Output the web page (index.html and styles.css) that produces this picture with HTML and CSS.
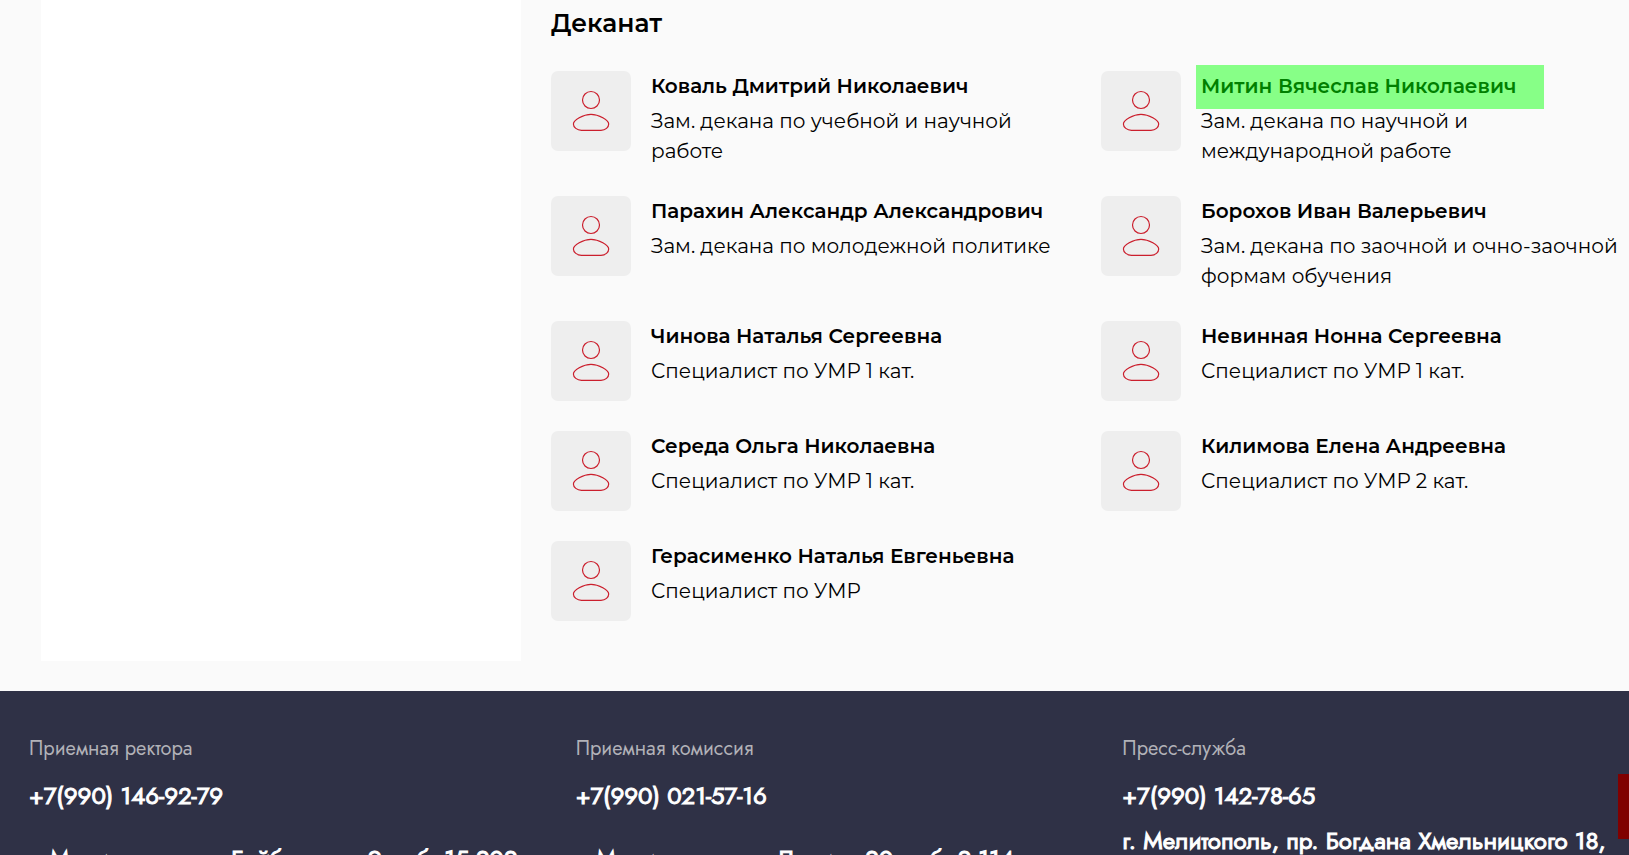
FILE: index.html
```html
<!DOCTYPE html>
<html lang="ru">
<head>
    <meta charset="UTF-8">
    <meta name="viewport" content="width=device-width, initial-scale=1.0">
    <title>Деканат</title>
    <link rel="stylesheet" href="styles.css">
</head>
<body>
    <svg class="sprite" width="0" height="0" aria-hidden="true">
        <symbol id="user" viewBox="0 0 80 80">
            <circle cx="40" cy="29" r="8.5"/>
            <path d="M30.5 59.3H50C54.5 59.3 57.7 56.3 57.7 53C57.7 49.5 48 43.3 40 43.3C32 43.3 22.4 49.5 22.4 53C22.4 56.3 26 59.3 30.5 59.3Z"/>
        </symbol>
    </svg>

    <main class="page">
        <aside class="sidebar"></aside>
        <section class="content">
            <h2>Деканат</h2>
            <ul class="staff">
                <li class="person">
                    <svg class="avatar"><use href="#user"/></svg>
                    <div class="info">
                        <h3 class="name">Коваль Дмитрий Николаевич</h3>
                        <p class="post">Зам. декана по учебной и научной работе</p>
                    </div>
                </li>
                <li class="person">
                    <svg class="avatar"><use href="#user"/></svg>
                    <div class="info">
                        <h3 class="name marked">Митин Вячеслав Николаевич</h3>
                        <p class="post">Зам. декана по научной и международной работе</p>
                    </div>
                </li>
                <li class="person">
                    <svg class="avatar"><use href="#user"/></svg>
                    <div class="info">
                        <h3 class="name">Парахин Александр Александрович</h3>
                        <p class="post">Зам. декана по молодежной политике</p>
                    </div>
                </li>
                <li class="person">
                    <svg class="avatar"><use href="#user"/></svg>
                    <div class="info">
                        <h3 class="name">Борохов Иван Валерьевич</h3>
                        <p class="post">Зам. декана по заочной и очно-заочной формам обучения</p>
                    </div>
                </li>
                <li class="person">
                    <svg class="avatar"><use href="#user"/></svg>
                    <div class="info">
                        <h3 class="name">Чинова Наталья Сергеевна</h3>
                        <p class="post">Специалист по УМР 1 кат.</p>
                    </div>
                </li>
                <li class="person">
                    <svg class="avatar"><use href="#user"/></svg>
                    <div class="info">
                        <h3 class="name">Невинная Нонна Сергеевна</h3>
                        <p class="post">Специалист по УМР 1 кат.</p>
                    </div>
                </li>
                <li class="person">
                    <svg class="avatar"><use href="#user"/></svg>
                    <div class="info">
                        <h3 class="name">Середа Ольга Николаевна</h3>
                        <p class="post">Специалист по УМР 1 кат.</p>
                    </div>
                </li>
                <li class="person">
                    <svg class="avatar"><use href="#user"/></svg>
                    <div class="info">
                        <h3 class="name">Килимова Елена Андреевна</h3>
                        <p class="post">Специалист по УМР 2 кат.</p>
                    </div>
                </li>
                <li class="person">
                    <svg class="avatar"><use href="#user"/></svg>
                    <div class="info">
                        <h3 class="name">Герасименко Наталья Евгеньевна</h3>
                        <p class="post">Специалист по УМР</p>
                    </div>
                </li>
            </ul>
        </section>
    </main>

    <footer class="footer">
        <div class="contact">
            <p class="label">Приемная ректора</p>
            <a class="phone" href="tel:+79901469279">+7(990) 146-92-79</a>
            <p class="address spaced">г. Мелитополь, ул. Бейбулатова 9, каб. 15.202</p>
        </div>
        <div class="contact">
            <p class="label">Приемная комиссия</p>
            <a class="phone" href="tel:+79900215716">+7(990) 021-57-16</a>
            <p class="address spaced">г. Мелитополь, ул. Ленина 20, каб. 2.114</p>
        </div>
        <div class="contact">
            <p class="label">Пресс-служба</p>
            <a class="phone" href="tel:+79901427865">+7(990) 142-78-65</a>
            <p class="address">г. Мелитополь, пр. Богдана Хмельницкого 18,</p>
        </div>
    </footer>

    <button class="side-tab" type="button" aria-label="Открыть панель"></button>
</body>
</html>
```
FILE: styles.css
```css
* {
    box-sizing: border-box;
}

body {
    margin: 0;
    height: 100vh;
    overflow: hidden;
    background: #fafafa;
    color: #000;
    font-family: Montserrat, Inter, sans-serif;
    font-size: 20px;
    line-height: 30px;
}

h2, h3, p, ul {
    margin: 0;
    padding: 0;
}

.sprite {
    position: absolute;
}

/* content */
.page {
    display: grid;
    grid-template-columns: 480px 1fr;
    gap: 30px;
    padding: 0 8px 30px 41px;
}

.sidebar {
    background: #fff;
}

.content {
    padding: 8px 0 40px;
}

.content h2 {
    margin-bottom: 33px;
    font-size: 25px;
    font-weight: 600;
}

.staff {
    display: grid;
    grid-template-columns: 1fr 1fr;
    gap: 30px;
    list-style: none;
}

.person {
    display: flex;
    align-items: flex-start;
    gap: 20px;
}

.avatar {
    flex: none;
    width: 80px;
    height: 80px;
    border-radius: 7px;
    background: #eee;
    fill: none;
    stroke: #cb1f2d;
    stroke-width: 1.2;
}

.name {
    margin-bottom: 5px;
    font-size: 20px;
    font-weight: 600;
}

.marked {
    position: relative;
    z-index: 0;
    color: #008000;
}

.marked::before {
    content: "";
    position: absolute;
    z-index: -1;
    top: -6px;
    bottom: -8px;
    left: -5px;
    width: 348px;
    background: #87ff87;
}

/* footer */
.footer {
    display: grid;
    grid-template-columns: repeat(3, minmax(0, 1fr));
    gap: 48px;
    padding: 43px 8px 42px 29px;
    background: #2f3146;
    color: #fff;
    font-family: Jost, Roboto, sans-serif;
}

.label {
    margin-bottom: 17px;
    color: #b2b2b8;
}

.phone,
.address {
    color: #fff;
    font-size: 24px;
    -webkit-text-stroke: 1px #fff;
    text-decoration: none;
}

.phone {
    display: block;
}

.address {
    margin-top: 15px;
}

.address.spaced {
    margin-top: 33px;
}

.side-tab {
    position: fixed;
    right: 0;
    bottom: 16px;
    width: 11px;
    height: 65px;
    padding: 0;
    border: none;
    background: #800000;
    cursor: pointer;
}
```
